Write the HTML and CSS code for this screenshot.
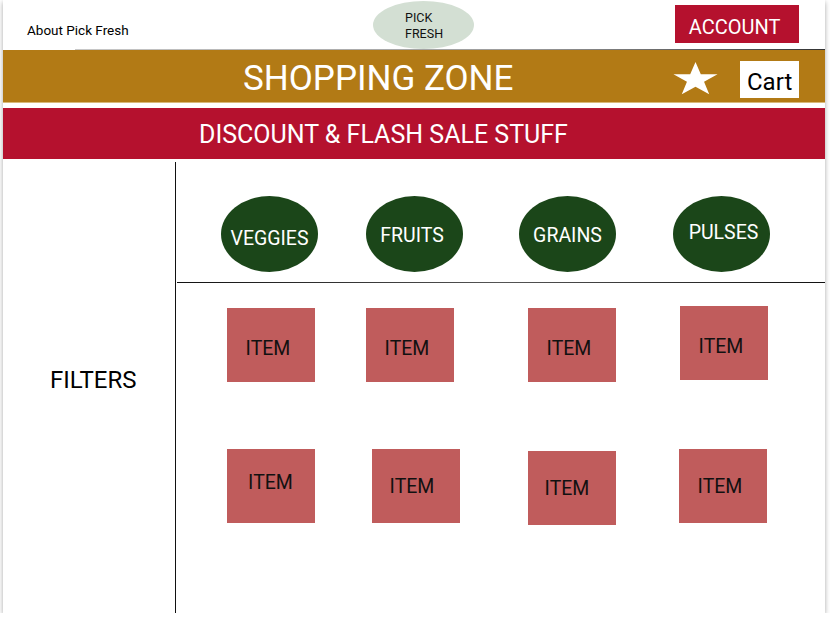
FILE: index.html
```html
<!DOCTYPE html>
<html lang="en">
<head>
<meta charset="utf-8">
<title>Pick Fresh - Shopping Zone</title>
<link rel="stylesheet" href="styles.css">
</head>
<body>
<div class="card">
  <header class="topbar">
    <div class="about">About Pick Fresh</div>
    <div class="logo"><span>PICK</span><span>FRESH</span></div>
    <div class="account">ACCOUNT</div>
  </header>
  <div class="topline"></div>
  <div class="zone">
    <div class="zone-title">SHOPPING ZONE</div>
    <svg class="star" viewBox="0 0 100 95" preserveAspectRatio="none" aria-hidden="true">
      <polygon points="50,0 61.8,35 99,35 69,57 80.5,93 50,71 19.5,93 31,57 1,35 38.2,35" fill="#ffffff"/>
    </svg>
    <div class="cart">Cart</div>
  </div>
  <div class="sale">DISCOUNT &amp; FLASH SALE STUFF</div>
  <main class="main">
    <aside class="filters"><span>FILTERS</span></aside>
    <section class="content">
      <div class="cats">
        <div class="cat cat-veg">VEGGIES</div>
        <div class="cat cat-left">FRUITS</div>
        <div class="cat">GRAINS</div>
        <div class="cat cat-up">PULSES</div>
      </div>
      <div class="divider"></div>
      <div class="items">
        <div class="item t-low">ITEM</div>
        <div class="item t-low">ITEM</div>
        <div class="item t-low">ITEM</div>
        <div class="item item-up t-low">ITEM</div>
        <div class="item t-high">ITEM</div>
        <div class="item item-right">ITEM</div>
        <div class="item item-down">ITEM</div>
        <div class="item item-left">ITEM</div>
      </div>
    </section>
  </main>
</div>
</body>
</html>
```

FILE: styles.css
```css
* { box-sizing: border-box; }
html, body {
  margin: 0;
  padding: 0;
  background: #ffffff;
}
body {
  font-family: Roboto, "Liberation Sans", Arial, sans-serif;
  color: #000;
}
.card {
  margin-left: 3px;
  width: 822px;
  height: 613px;
  background: #fff;
  box-shadow: 0 2px 5px rgba(0, 0, 0, 0.35);
  display: flex;
  flex-direction: column;
  overflow: hidden;
}

/* top header */
.topbar {
  height: 49px;
  display: flex;
  align-items: flex-start;
}
.about {
  width: 370px;
  padding-left: 24px;
  padding-top: 22px;
  font-size: 13.5px;
  line-height: 16px;
}
.logo {
  width: 101px;
  height: 48px;
  margin-top: 1px;
  border-radius: 50%;
  background: #d3dfd3;
  display: flex;
  flex-direction: column;
  padding-left: 32px;
  padding-top: 9px;
  font-size: 12.5px;
  line-height: 16px;
  color: #111;
}
.account {
  margin-left: auto;
  margin-right: 26px;
  margin-top: 5px;
  width: 124px;
  height: 38px;
  background: #b5112e;
  color: #fff;
  font-size: 20px;
  display: flex;
  align-items: center;
  justify-content: center;
  padding-top: 5px;
  padding-right: 5px;
}
.topline {
  height: 1px;
  margin-left: 72px;
  background: linear-gradient(to right, #c8c8c8, #9a9a9a 60%, #333);
}

/* gold bar */
.zone {
  height: 53px;
  background: #b27a15;
  border-bottom: 1px solid #d8b87a;
  display: flex;
  align-items: center;
  padding-left: 240px;
}
.zone-title {
  color: #fff;
  font-size: 35px;
  line-height: 40px;
  padding-top: 5px;
  flex: 1;
}
.star {
  width: 45px;
  height: 33px;
  margin-right: 22px;
  margin-top: 5px;
}
.cart {
  width: 59px;
  height: 37px;
  background: #fff;
  color: #000;
  font-size: 24px;
  display: flex;
  align-items: center;
  padding-left: 7px;
  padding-top: 4px;
  margin-right: 26px;
  margin-top: 7px;
}

/* red bar */
.sale {
  margin-top: 5px;
  height: 51px;
  background: #b5112e;
  color: #fff;
  font-size: 25px;
  display: flex;
  align-items: center;
  padding-left: 196px;
  padding-top: 2px;
}

/* main */
.main {
  margin-top: 3px;
  flex: 1;
  display: grid;
  grid-template-columns: 173px 1fr;
}
.filters {
  border-right: 1px solid #111;
  display: flex;
  align-items: center;
  padding-left: 47px;
  padding-bottom: 16px;
  font-size: 24px;
}
.content {
  display: flex;
  flex-direction: column;
}
.cats {
  height: 120px;
  padding-top: 34px;
  padding-left: 45px;
  display: grid;
  grid-template-columns: 145px 153px 154px 97px;
  align-items: start;
}
.cat {
  width: 97px;
  height: 76px;
  border-radius: 50%;
  background: #1b4619;
  color: #fff;
  font-size: 19.5px;
  display: flex;
  align-items: center;
  justify-content: center;
  padding-top: 2px;
}
.cat-veg { padding-top: 8px; }
.cat-left { padding-right: 5px; }
.cat-up { padding-top: 0; padding-bottom: 4px; padding-left: 4px; }
.divider {
  height: 1px;
  margin-left: 1px;
  background: linear-gradient(to right, #111, #555 50%, #111);
}
.items {
  padding-top: 25px;
  padding-left: 51px;
  display: grid;
  grid-template-columns: 139px 162px 152px 88px;
  grid-auto-rows: 74px;
  row-gap: 67px;
  align-items: start;
}
.item {
  width: 88px;
  height: 74px;
  background: #c05c5c;
  color: #111;
  font-size: 19.5px;
  display: flex;
  align-items: center;
  justify-content: center;
  padding-right: 6px;
}
.t-low { padding-top: 6px; }
.t-high { padding-bottom: 8px; padding-right: 1px; }
.item-up { margin-top: -2px; }
.item-right { margin-left: 6px; padding-right: 8px; }
.item-down { margin-top: 2px; padding-right: 10px; }
.item-left { margin-left: -1px; }
```
